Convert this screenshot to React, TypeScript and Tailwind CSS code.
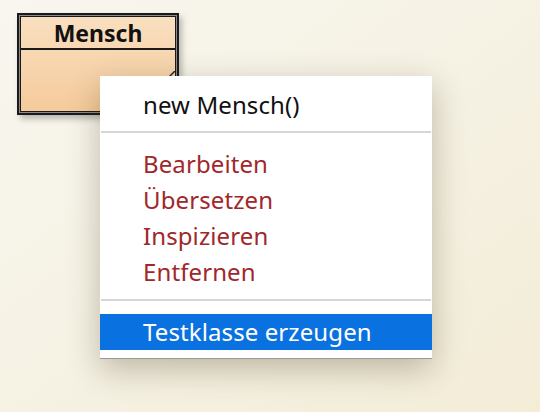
import React from 'react'

const FONT = { fontFamily: '"Noto Sans", "DejaVu Sans", sans-serif' }

// Item in the popup menu
function MenuItem({ label, tone = 'black', active = false }: { label: string; tone?: 'black' | 'red'; active?: boolean }) {
  const color = active ? 'text-white bg-[#0a72e0]' : tone === 'red' ? 'text-[#a0282b]' : 'text-[#111111]'
  return (
    <div className={`h-9 pl-[43px] flex items-center text-[24px] tracking-[0.1px] ${color}`}>
      {label}
    </div>
  )
}

function Separator({ top, bottom }: { top: string; bottom: string }) {
  return (
    <div className={`${top} ${bottom} px-px`}>
      <div className="h-[2px] bg-[#d6d6d6]" />
    </div>
  )
}

export default function App() {
  return (
    <div
      className="relative w-[540px] h-[412px] overflow-hidden bg-gradient-to-br from-[#f8f6ef] to-[#f3edd8]"
      style={FONT}
    >
      {/* Class box */}
      <div className="absolute left-[17px] top-[13px] w-[162px] h-[102px] border-2 border-[#1a1a1a] bg-[#8a8a8a] p-px shadow-[3px_4px_6px_rgba(0,0,0,0.25)]">
        <div className="relative w-full h-full border border-[#1a1a1a] flex flex-col bg-gradient-to-b from-[#f9dfc0] to-[#f5cb9b]">
          <div className="h-[33px] border-b-2 border-[#1a1a1a] flex items-center justify-center font-bold text-[23px] text-[#111] leading-none pt-px">
            Mensch
          </div>
          <div className="flex-1" />
          {/* resize grip */}
          <svg className="absolute right-0 bottom-0" width="40" height="40" viewBox="0 0 40 40">
            <line x1="40" y1="0" x2="0" y2="40" stroke="#222" strokeWidth="1.5" />
          </svg>
        </div>
      </div>

      {/* Context menu */}
      <div className="absolute left-[100px] top-[76px] w-[332px] bg-white pt-[11px] pb-2 border-b border-[#9a9a9a] shadow-[0_10px_30px_rgba(60,50,20,0.3)]">
        <MenuItem label="new Mensch()" />
        <Separator top="pt-[8px]" bottom="pb-[13px]" />
        <MenuItem label="Bearbeiten" tone="red" />
        <MenuItem label="Übersetzen" tone="red" />
        <MenuItem label="Inspizieren" tone="red" />
        <MenuItem label="Entfernen" tone="red" />
        <Separator top="pt-[9px]" bottom="pb-[13px]" />
        <MenuItem label="Testklasse erzeugen" active />
      </div>
    </div>
  )
}
